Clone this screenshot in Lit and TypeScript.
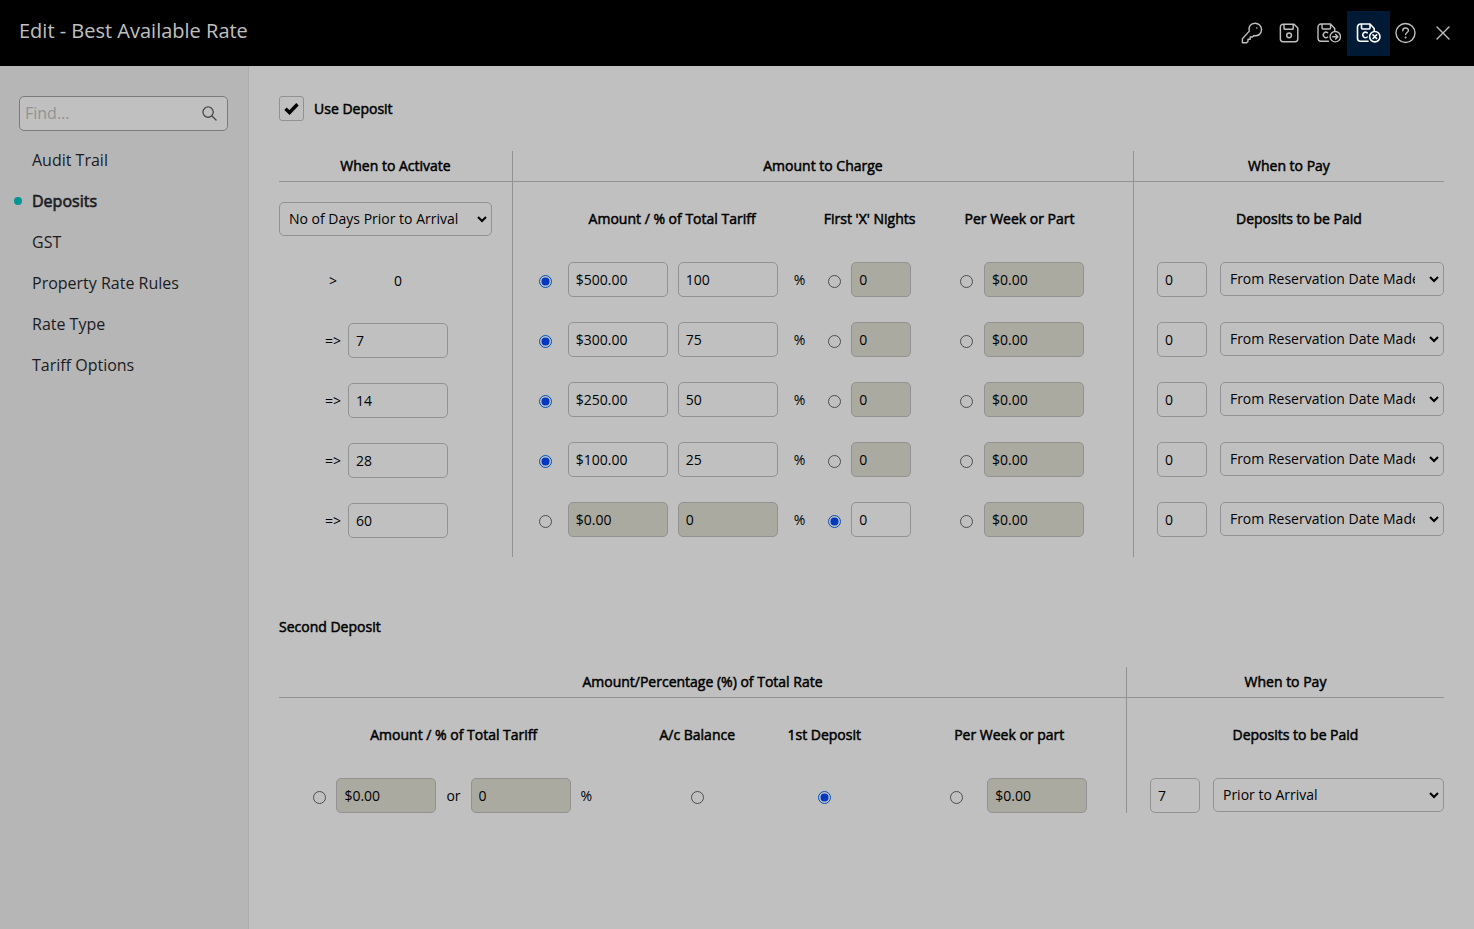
import { LitElement, html, svg, css } from "lit";
import { customElement } from "lit/decorators.js";

interface DepositRow {
  sign: string;
  days: string;
  mode: "amount" | "nights" | "week";
  amount: string;
  percent: string;
}

const rows: DepositRow[] = [
  { sign: ">", days: "0", mode: "amount", amount: "$500.00", percent: "100" },
  { sign: "=>", days: "7", mode: "amount", amount: "$300.00", percent: "75" },
  { sign: "=>", days: "14", mode: "amount", amount: "$250.00", percent: "50" },
  { sign: "=>", days: "28", mode: "amount", amount: "$100.00", percent: "25" },
  { sign: "=>", days: "60", mode: "nights", amount: "$0.00", percent: "0" },
];

const navItems = ["Audit Trail", "Deposits", "GST", "Property Rate Rules", "Rate Type", "Tariff Options"];

const floppy = svg`<path d="M5.500 2.500h12l4 4v12a3 3 0 0 1-3 3h-13a3 3 0 0 1-3-3v-13a3 3 0 0 1 3-3zM6.500 2.500v4.500a1 1 0 0 0 1 1h8a1 1 0 0 0 1-1v-4.500"/>`;
const floppyCut = svg`<path d="M12 18.700H4.500a3 3 0 0 1-3-3v-11.200a3 3 0 0 1 3-3H14l4.200 4.500v2.500M5.500 1.500v4a1 1 0 0 0 1 1h6.500a1 1 0 0 0 1-1v-4M11.200 10.300a2.700 2.700 0 1 0 0 4.200"/>`;

@customElement("app-root")
export class AppRoot extends LitElement {
  static styles = css`
    :host {
      display: flex;
      flex-direction: column;
      min-height: 100vh;
      background: #c0c0c0;
      color: #000;
      font: 14px/20px "Open Sans", sans-serif;
    }
    * { box-sizing: border-box; }
    .bar {
      display: flex;
      align-items: center;
      justify-content: space-between;
      height: 66px;
      padding: 0 12px 0 19px;
      background: #000;
      color: #c0c0c0;
    }
    .bar h1 { margin: 0; padding-bottom: 4px; font-size: 20px; line-height: 28px; font-weight: 400; }
    .tools { display: flex; align-items: center; }
    .tool {
      display: grid;
      place-items: center;
      width: 38px;
      height: 45px;
      padding: 0;
      border: 0;
      background: none;
      color: #c0c0c0;
    }
    .tool.active { width: 43px; margin-right: -4px; background: #001a36; color: #fff; }
    .tool svg { display: block; fill: none; stroke: currentColor; stroke-linecap: round; stroke-linejoin: round; }
    .body { display: flex; flex: 1; }
    .side {
      flex: none;
      width: 249px;
      padding: 30px 20px 30px 19px;
      border-right: 1px solid #adadad;
      background: #b6b6b6;
    }
    .search {
      display: flex;
      align-items: center;
      height: 35px;
      padding: 0 10px 0 5px;
      border: 1px solid #7b7b7b;
      border-radius: 5px;
      background: #c0c0c0;
    }
    .search input {
      flex: 1;
      min-width: 0;
      padding: 0 0 2px;
      border: 0;
      outline: 0;
      background: none;
      font: 16px/24px "Open Sans", sans-serif;
    }
    .search input::placeholder { color: #929292; }
    .search svg { fill: none; stroke: #4a4a4a; stroke-width: 1.4; stroke-linecap: round; }
    .nav { margin: 8px 0 0; padding: 0; list-style: none; }
    .nav a {
      display: flex;
      align-items: center;
      height: 41px;
      padding-left: 13px;
      color: #1b1b22;
      font-size: 16px;
      line-height: 24px;
      text-decoration: none;
    }
    .nav .current { margin-left: -5px; padding-left: 0; gap: 10px; -webkit-text-stroke: 0.6px; }
    .dot { width: 8px; height: 8px; border-radius: 50%; background: #009698; }
    .main { flex: 1; min-width: 0; padding: 30px; overflow-x: auto; }
    .use { display: flex; align-items: center; gap: 10px; height: 25px; margin-bottom: 30px; }
    .strong, th { font-weight: 400; -webkit-text-stroke: 0.5px; }
    .check {
      display: grid;
      place-items: center;
      width: 25px;
      height: 25px;
      margin: 0;
      appearance: none;
      border: 1px solid #929292;
      border-radius: 3px;
    }
    .tick { display: grid; }
    .tick > * { grid-area: 1 / 1; place-self: center; }
    .tick svg { fill: none; stroke: #000; stroke-width: 3.4; pointer-events: none; }
    h2 { margin: 60px 0 30px; font-size: 14px; line-height: 20px; font-weight: 400; }
    table { width: 100%; min-width: 1060px; table-layout: fixed; border-collapse: separate; border-spacing: 0; }
    th, td { padding: 0; }
    .top th { height: 31px; border-bottom: 1px solid #929292; }
    .rule { border-left: 1px solid #929292; }
    .sub th { height: 75px; padding-top: 20px; vertical-align: top; }
    .sub .head { display: block; padding: 7px 0; }
    td { height: 60px; padding: 5px 0 20px; }
    .last td { height: 40px; padding-bottom: 0; }
    .c-activate { width: 20%; }
    .c-amount { width: 26.2%; }
    .c-nights { width: 9%; }
    .c-week { width: 18.1%; }
    .c2-amount { width: 30%; }
    .c2-balance { width: 11.8%; }
    .c2-first { width: 10%; }
    .c2-week { width: 20.9%; }
    .line { display: flex; align-items: center; justify-content: center; gap: 10px; }
    .days { justify-content: flex-start; gap: 5px; padding-left: 44px; height: 37px; margin-bottom: -2px; }
    .days .sign { width: 20px; text-align: center; }
    .days .fixed { width: 100px; text-align: center; }
    .sub .amount, td.amount { padding-left: 14px; }
    .amount .pair { display: flex; gap: 10px; }
    .amount .line { gap: 16px; }
    .second .amount .line { gap: 10px; padding-right: 2px; }
    .second td.amount, .second .sub .amount { padding-left: 0; }
    .sub .week { padding-right: 16px; }
    td.week { padding-right: 11px; }
    .week .line { gap: 11px; }
    .second .sub .week { padding: 20px 0 0 10px; }
    .second td.week { padding: 5px 0 0 29px; }
    .second .week .line { gap: 24px; }
    .sub .pay { padding-left: 20px; }
    td.pay { padding-left: 23px; }
    .pay .line { gap: 13px; }
    .field {
      width: 100px;
      height: 35px;
      padding: 0 7px;
      border: 1px solid #929292;
      border-radius: 5px;
      background: none;
      color: #000;
      font: 14px/20px "Open Sans", sans-serif;
    }
    .field:disabled { background: #abaaa1; color: #000; }
    .field.small { width: 60px; }
    .field.tiny { width: 50px; flex: none; }
    select {
      width: 213px;
      height: 34px;
      padding: 0 24px 0 9px;
      appearance: none;
      border: 1px solid #929292;
      border-radius: 5px;
      background: #c0c0c0 url("data:image/svg+xml,%3Csvg xmlns='http://www.w3.org/2000/svg' width='12' height='8'%3E%3Cpath d='M2 2l4 4 4-4' fill='none' stroke='%23000' stroke-width='2'/%3E%3C/svg%3E") no-repeat right 3px center;
      color: #000;
      font: 14px/20px "Open Sans", sans-serif;
      text-overflow: clip;
      -webkit-text-stroke: 0;
    }
    .pay select { flex: 1; min-width: 0; width: auto; padding-right: 28px; margin-bottom: 1px; }
    .activate select { display: block; }
    .radio {
      flex: none;
      display: grid;
      place-items: center;
      width: 13px;
      height: 13px;
      margin: 3px 0 0;
      appearance: none;
      border: 1px solid #4d4d4d;
      border-radius: 50%;
    }
    .radio:checked { border-color: #0050bd; }
    .radio:checked::before { content: ""; width: 7px; height: 7px; border-radius: 50%; background: #0039c0; box-shadow: 0 0 0 0.5px #0039c0; }
  `;

  private toolbar() {
    return html`<div class="tools">
      <button class="tool" aria-label="Access">
        <svg width="22" height="22" viewBox="0 0 22 22" stroke-width="1.4">
          <path d="M8.300 9.100C7 4.500 10 1.200 14 1.200a6.400 6.400 0 0 1 6.500 6.300c0 4-3 7-7.600 6l-1.400 1.500H9.200v2.200H7v2.200L5.600 20.700H1.400v-4z" />
          <circle cx="15.800" cy="6" r="0.800" fill="currentColor" stroke="none" />
        </svg>
      </button>
      <button class="tool" aria-label="Save">
        <svg width="22" height="22" viewBox="1 0 24 24" stroke-width="1.6">${floppy}<circle cx="12" cy="14.500" r="2.600" /></svg>
      </button>
      <button class="tool" aria-label="Save and continue">
        <svg width="26" height="22" viewBox="-1.500 -0.500 26 22" stroke-width="1.400">${floppyCut}<circle cx="18.800" cy="14.200" r="5.200" /><path d="M16.200 14.200h5M19.100 11.900l2.300 2.300-2.300 2.300" /></svg>
      </button>
      <button class="tool active" aria-label="Save and exit">
        <svg width="26" height="22" viewBox="0 -0.500 26 22" stroke-width="1.600">${floppyCut}<circle cx="18.800" cy="14.200" r="5.200" /><path d="M17 12.400l3.600 3.600M20.600 12.400l-3.600 3.600" /></svg>
      </button>
      <button class="tool" aria-label="Help">
        <svg width="22" height="22" viewBox="-0.500 0 22 22" stroke-width="1.400"><circle cx="11" cy="11" r="9.500" /><path d="M8.300 8.700c0-3.600 5.600-3.400 5.600-.2 0 2-2.700 2-2.700 4" /><circle cx="11.100" cy="15.600" r="1" fill="currentColor" stroke="none" /></svg>
      </button>
      <button class="tool" aria-label="Close">
        <svg width="16" height="16" viewBox="0 0 16 16" stroke-width="1.400"><path d="M2 2l12 12M14 2L2 14" /></svg>
      </button>
    </div>`;
  }

  private renderRow(row: DepositRow, i: number) {
    const off = (mode: string) => row.mode !== mode;
    const radio = (mode: string, label: string) => html`<input class="radio" type="radio" name="charge-${i}" aria-label=${label} .checked=${!off(mode)} />`;
    return html`<tr>
      <td>
        <div class="line days">
          <span class="sign">${row.sign}</span>
          ${i === 0
            ? html`<span class="fixed">${row.days}</span>`
            : html`<input class="field" aria-label="Days" .value=${row.days} />`}
        </div>
      </td>
      <td class="rule amount">
        <div class="line">
          ${radio("amount", "Charge amount or percentage")}
          <div class="pair">
            <input class="field" aria-label="Amount" .value=${row.amount} ?disabled=${off("amount")} />
            <input class="field" aria-label="Percentage" .value=${row.percent} ?disabled=${off("amount")} />
          </div>
          <span>%</span>
        </div>
      </td>
      <td>
        <div class="line">
          ${radio("nights", "Charge first nights")}
          <input class="field small" aria-label="Nights" .value=${"0"} ?disabled=${off("nights")} />
        </div>
      </td>
      <td class="week">
        <div class="line">
          ${radio("week", "Charge per week or part")}
          <input class="field" aria-label="Per week" .value=${"$0.00"} ?disabled=${off("week")} />
        </div>
      </td>
      <td class="rule pay">
        <div class="line">
          <input class="field tiny" aria-label="Pay days" .value=${"0"} />
          <select aria-label="Deposits to be paid"><option>From Reservation Date Made</option></select>
        </div>
      </td>
    </tr>`;
  }

  render() {
    return html`
      <header class="bar"><h1>Edit - Best Available Rate</h1>${this.toolbar()}</header>
      <div class="body">
        <aside class="side">
          <div class="search">
            <input type="text" placeholder="Find..." aria-label="Find" />
            <svg width="15" height="15" viewBox="0 0 16 16"><circle cx="6.500" cy="6.500" r="5.500" /><path d="M10.600 10.600L15 15" /></svg>
          </div>
          <ul class="nav">
            ${navItems.map((item) =>
              item === "Deposits"
                ? html`<li><a class="current" href="#" aria-current="page"><span class="dot"></span>${item}</a></li>`
                : html`<li><a href="#">${item}</a></li>`
            )}
          </ul>
        </aside>
        <main class="main">
          <div class="use">
            <span class="tick">
              <input class="check" id="use" type="checkbox" checked />
              <svg width="16" height="14" viewBox="0 0 16 14"><path d="M1.500 6.800L5.500 10.500 13.500 2.200" /></svg>
            </span>
            <label class="strong" for="use">Use Deposit</label>
          </div>
          <table>
            <colgroup><col class="c-activate" /><col class="c-amount" /><col class="c-nights" /><col class="c-week" /><col /></colgroup>
            <thead>
              <tr class="top"><th>When to Activate</th><th class="rule" colspan="3">Amount to Charge</th><th class="rule">When to Pay</th></tr>
              <tr class="sub">
                <th class="activate"><select aria-label="When to activate"><option>No of Days Prior to Arrival</option></select></th>
                <th class="rule amount"><span class="head">Amount / % of Total Tariff</span></th>
                <th><span class="head">First 'X' Nights</span></th>
                <th class="week"><span class="head">Per Week or Part</span></th>
                <th class="rule pay"><span class="head">Deposits to be Paid</span></th>
              </tr>
            </thead>
            <tbody>${rows.map((row, i) => this.renderRow(row, i))}</tbody>
          </table>
          <h2 class="strong">Second Deposit</h2>
          <table class="second">
            <colgroup><col class="c2-amount" /><col class="c2-balance" /><col class="c2-first" /><col class="c2-week" /><col /></colgroup>
            <thead>
              <tr class="top"><th colspan="4">Amount/Percentage (%) of Total Rate</th><th class="rule">When to Pay</th></tr>
              <tr class="sub">
                <th class="amount"><span class="head">Amount / % of Total Tariff</span></th>
                <th><span class="head">A/c Balance</span></th>
                <th><span class="head">1st Deposit</span></th>
                <th class="week"><span class="head">Per Week or part</span></th>
                <th class="rule pay"><span class="head">Deposits to be Paid</span></th>
              </tr>
            </thead>
            <tbody>
              <tr class="last">
                <td class="amount">
                  <div class="line">
                    <input class="radio" type="radio" name="second" aria-label="Amount or percentage" />
                    <input class="field" aria-label="Amount" value="$0.00" disabled />
                    <span>or</span>
                    <input class="field" aria-label="Percentage" value="0" disabled />
                    <span>%</span>
                  </div>
                </td>
                <td><div class="line"><input class="radio" type="radio" name="second" aria-label="Account balance" /></div></td>
                <td><div class="line"><input class="radio" type="radio" name="second" aria-label="First deposit" checked /></div></td>
                <td class="week">
                  <div class="line">
                    <input class="radio" type="radio" name="second" aria-label="Per week or part" />
                    <input class="field" aria-label="Per week" value="$0.00" disabled />
                  </div>
                </td>
                <td class="rule pay">
                  <div class="line">
                    <input class="field tiny" aria-label="Pay days" value="7" />
                    <select aria-label="Deposits to be paid"><option>Prior to Arrival</option></select>
                  </div>
                </td>
              </tr>
            </tbody>
          </table>
        </main>
      </div>
    `;
  }
}
